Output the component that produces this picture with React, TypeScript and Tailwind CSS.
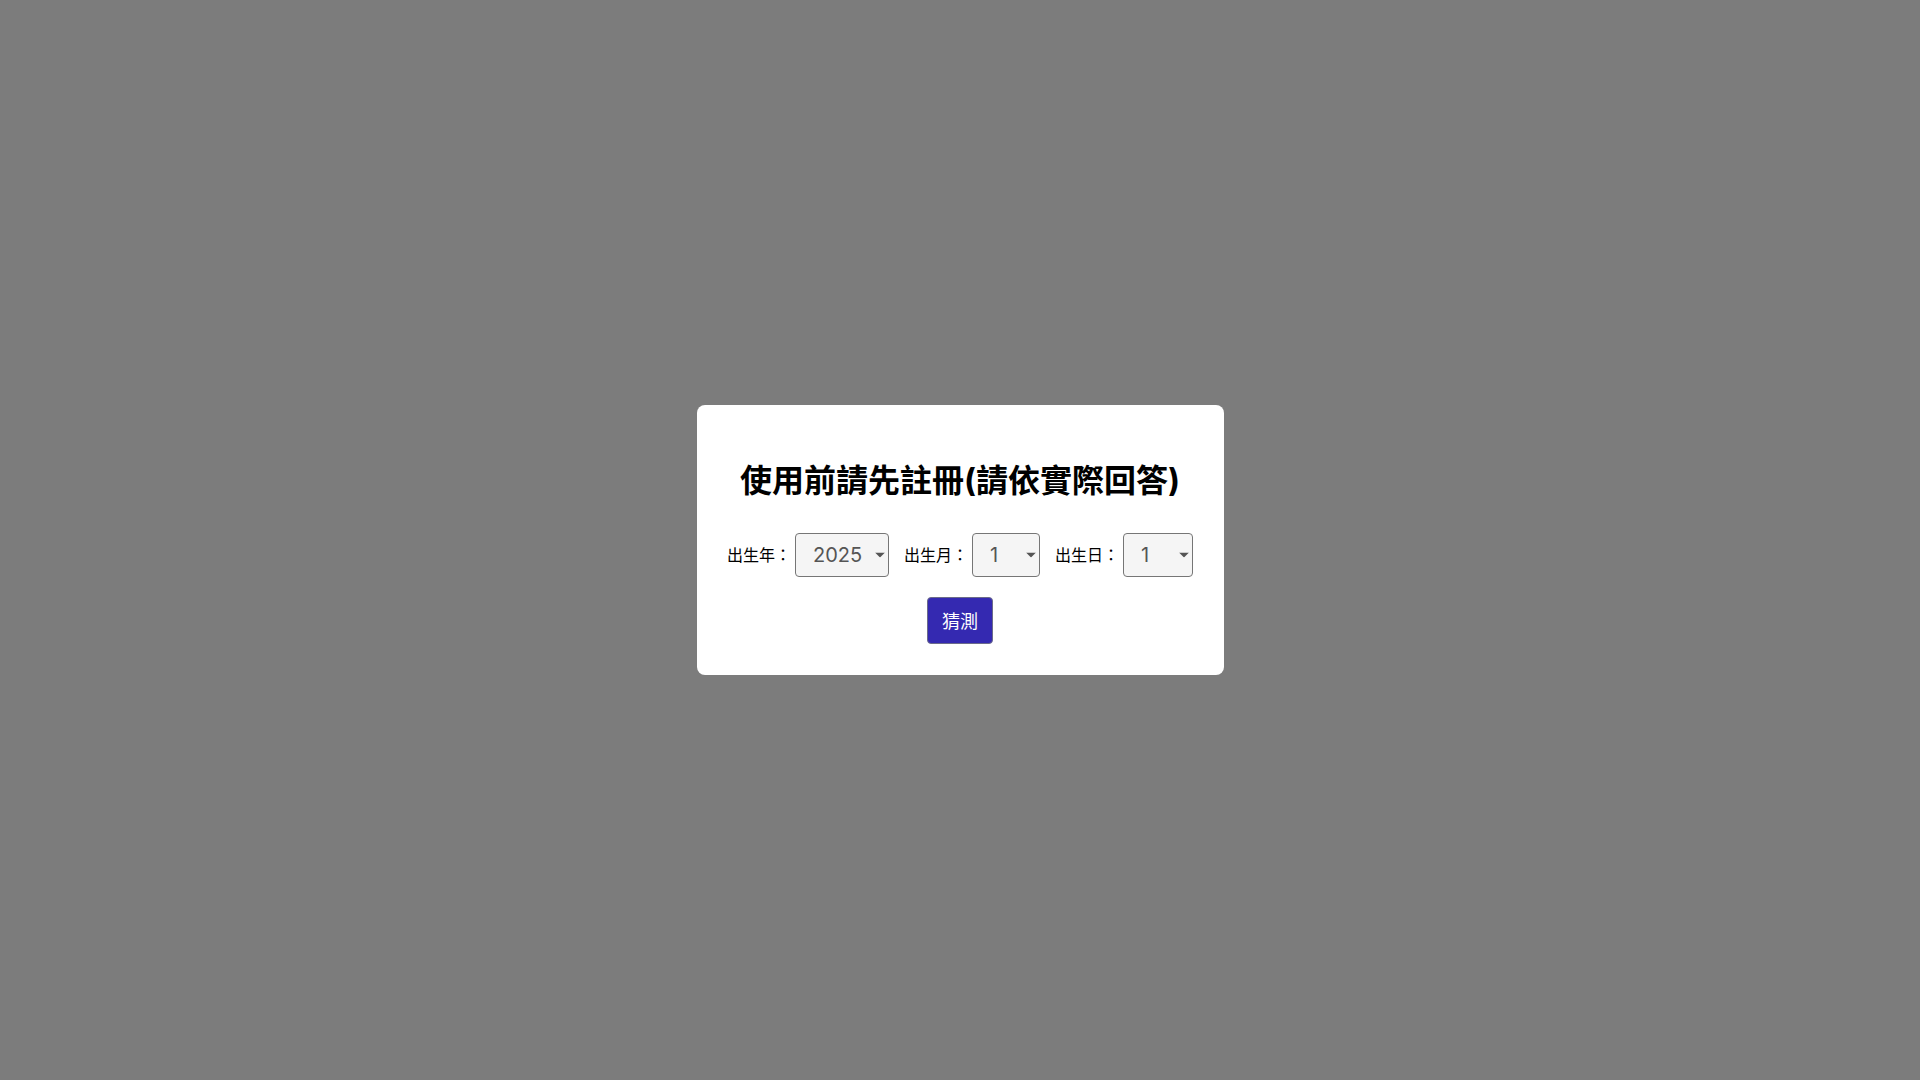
import React, { useState } from 'react';

const years = Array.from({ length: 126 }, (_, i) => 2025 - i);
const months = Array.from({ length: 12 }, (_, i) => i + 1);
const days = Array.from({ length: 31 }, (_, i) => i + 1);

const SelectBox: React.FC<{
  value: number;
  options: number[];
  width: string;
  onChange: (v: number) => void;
}> = ({ value, options, width, onChange }) => (
  <div className={`relative ${width} h-[44px]`}>
    <select
      value={value}
      onChange={(e) => onChange(Number(e.target.value))}
      className="appearance-none w-full h-full rounded-[4px] border border-[#767676] bg-[#f5f5f5] pl-[17px] pr-6 text-[20px] text-[#555] outline-none"
    >
      {options.map((o) => (
        <option key={o} value={o}>
          {o}
        </option>
      ))}
    </select>
    <svg
      className="pointer-events-none absolute right-[4px] top-1/2 -translate-y-1/2"
      width="10"
      height="5"
      viewBox="0 0 10 5"
    >
      <path d="M0 0 L10 0 L5 5 Z" fill="#555" />
    </svg>
  </div>
);

export default function App() {
  const [year, setYear] = useState(2025);
  const [month, setMonth] = useState(1);
  const [day, setDay] = useState(1);

  return (
    <div
      className="w-full h-screen bg-[#7c7c7c] flex items-center justify-center"
      style={{ fontFamily: 'Inter, "Noto Sans CJK TC", sans-serif' }}
    >
      <div className="w-[527px] bg-white rounded-[8px] pt-[52px] pb-[31px] flex flex-col items-center">
        <h1 className="text-[32px] leading-[48px] font-bold text-black">
          使用前請先註冊(請依實際回答)
        </h1>

        {/* Birth date row */}
        <div className="mt-[28px] flex items-center gap-[15px] text-[16px] text-black">
          <div className="flex items-center gap-[4px]">
            <span>出生年：</span>
            <SelectBox value={year} options={years} width="w-[94px]" onChange={setYear} />
          </div>
          <div className="flex items-center gap-[4px]">
            <span>出生月：</span>
            <SelectBox value={month} options={months} width="w-[68px]" onChange={setMonth} />
          </div>
          <div className="flex items-center gap-[4px]">
            <span>出生日：</span>
            <SelectBox value={day} options={days} width="w-[70px]" onChange={setDay} />
          </div>
        </div>

        <button className="mt-[20px] h-[47px] px-[14px] pt-[2px] rounded-[4px] border border-[#6b6b8a] bg-[#3429b1] text-white text-[18px]">
          猜測
        </button>
      </div>
    </div>
  );
}
